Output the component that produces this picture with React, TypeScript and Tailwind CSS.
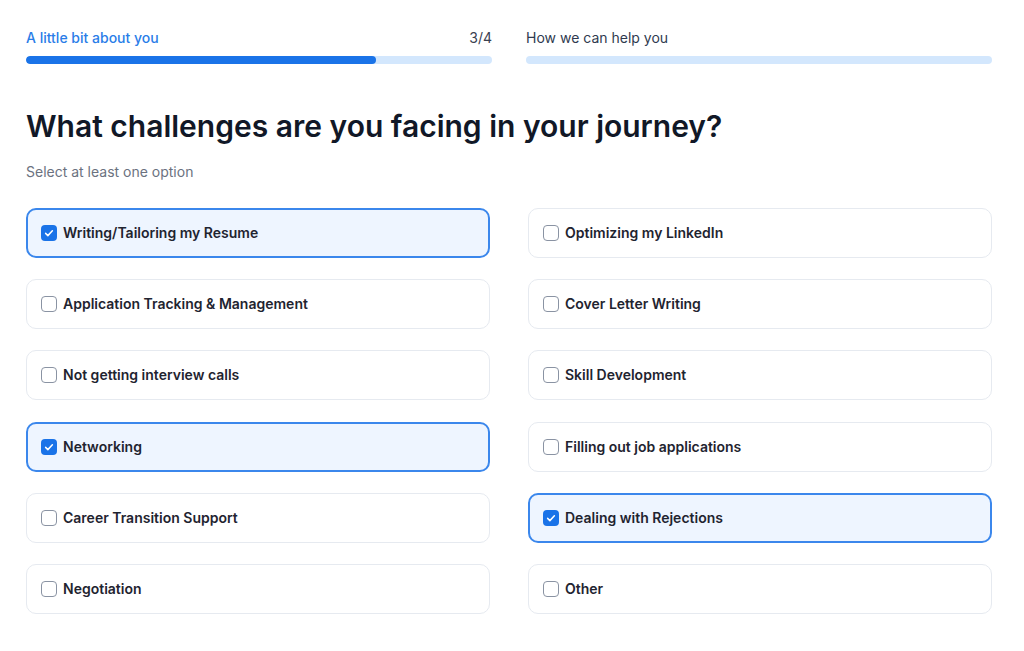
const OPTIONS = [
  { label: "Writing/Tailoring my Resume", checked: true },
  { label: "Optimizing my LinkedIn", checked: false },
  { label: "Application Tracking & Management", checked: false },
  { label: "Cover Letter Writing", checked: false },
  { label: "Not getting interview calls", checked: false },
  { label: "Skill Development", checked: false },
  { label: "Networking", checked: true },
  { label: "Filling out job applications", checked: false },
  { label: "Career Transition Support", checked: false },
  { label: "Dealing with Rejections", checked: true },
  { label: "Negotiation", checked: false },
  { label: "Other", checked: false },
];

const Checkbox = ({ checked }: { checked: boolean }) =>
  checked ? (
    <span className="w-4 h-4 rounded-[4px] bg-[#1a73e8] flex items-center justify-center shrink-0">
      <svg viewBox="0 0 16 16" className="w-3 h-3" fill="none" stroke="white" strokeWidth="2" strokeLinecap="round" strokeLinejoin="round">
        <path d="M3.5 8.5l3 3 6-6.5" />
      </svg>
    </span>
  ) : (
    <span className="w-4 h-4 rounded-[4px] border-[1.5px] border-[#8a93a3] bg-white shrink-0" />
  );

export default function App() {
  return (
    <div className="min-h-screen bg-white pl-[26px] pr-[32px] pt-7 font-['Inter',sans-serif]">
      {/* Progress */}
      <div className="grid grid-cols-2 gap-x-[34px]">
        <div>
          <div className="flex justify-between text-sm leading-5 mb-2">
            <span className="text-[#2a7de8] font-medium">A little bit about you</span>
            <span className="text-[#3a4150]">3/4</span>
          </div>
          <div className="h-2 rounded-full bg-[#d3e7fd] overflow-hidden">
            <div className="h-full w-3/4 rounded-full bg-[#1a73e8]" />
          </div>
        </div>
        <div>
          <div className="text-sm leading-5 mb-2 text-[#2f3a4f]">How we can help you</div>
          <div className="h-2 rounded-full bg-[#d3e7fd]" />
        </div>
      </div>

      <h1 className="mt-[42px] text-[30px] leading-10 font-semibold text-[#111827]">
        What challenges are you facing in your journey?
      </h1>
      <p className="mt-4 text-sm leading-5 text-[#6b7280]">Select at least one option</p>

      {/* Options */}
      <div className="mt-[26px] grid grid-cols-2 gap-x-[38px] gap-y-[21.2px]">
        {OPTIONS.map((o) => (
          <div
            key={o.label}
            className={
              o.checked
                ? "flex items-center gap-1.5 rounded-[10px] border-2 border-[#3b87ec] bg-[#eef5ff] px-[13px] py-[13px]"
                : "flex items-center gap-1.5 rounded-[10px] border border-[#e6eaf0] bg-white px-[13px] py-[14px]"
            }
          >
            <span className={o.checked ? "flex" : "flex pl-px"}>
              <Checkbox checked={o.checked} />
            </span>
            <span className="text-sm leading-5 font-semibold text-[#1f2430]">{o.label}</span>
          </div>
        ))}
      </div>
    </div>
  );
}
